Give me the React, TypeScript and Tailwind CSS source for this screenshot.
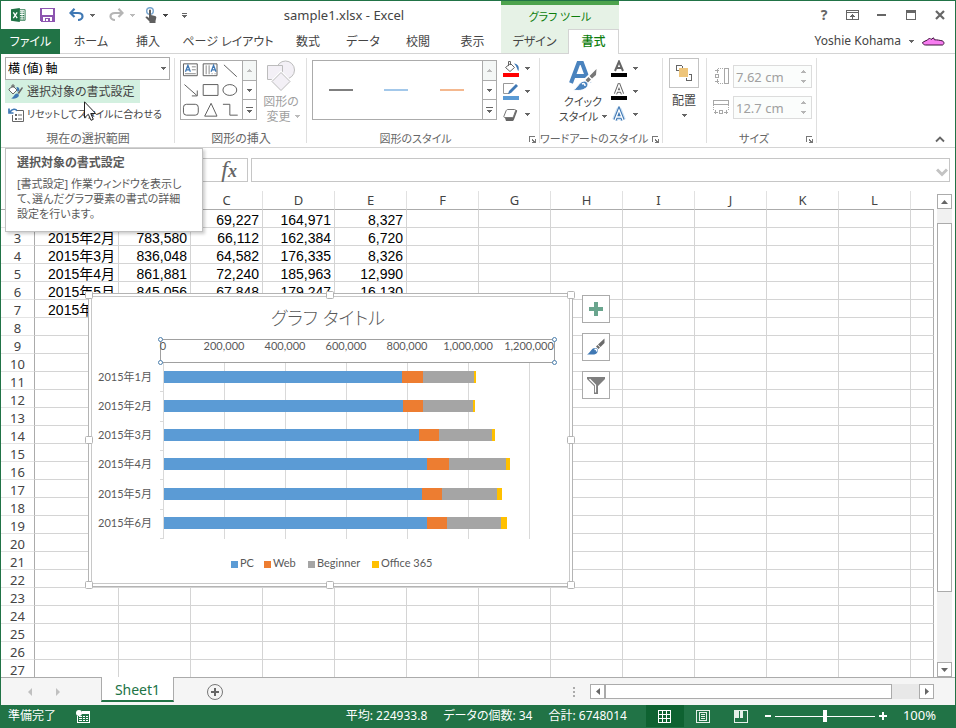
import type { ReactNode } from 'react';
import clsx from 'clsx';

const COLUMNS = ['A', 'B', 'C', 'D', 'E', 'F', 'G', 'H', 'I', 'J', 'K', 'L'];
const FIRST_ROW = 2;
const LAST_ROW = 27;

// month, PC, Web, Beginner, Office 365
const DATA: [string, number, number, number, number][] = [
  ['2015年1月', 781420, 69227, 164971, 8327],
  ['2015年2月', 783580, 66112, 162384, 6720],
  ['2015年3月', 836048, 64582, 176335, 8326],
  ['2015年4月', 861881, 72240, 185963, 12990],
  ['2015年5月', 845056, 67848, 179247, 16130],
  ['2015年6月', 863210, 65304, 177120, 18993],
];

const SERIES = [
  { name: 'PC', color: '#5b9bd5', x: 231 },
  { name: 'Web', color: '#ed7d31', x: 264 },
  { name: 'Beginner', color: '#a5a5a5', x: 308 },
  { name: 'Office 365', color: '#ffc000', x: 372 },
];

const TABS = [
  { label: 'ホーム', width: 'w-[62px]' },
  { label: '挿入', width: 'w-[52px]' },
  { label: 'ページ レイアウト', width: 'w-[108px]' },
  { label: '数式', width: 'w-[52px]' },
  { label: 'データ', width: 'w-[58px]' },
  { label: '校閲', width: 'w-[52px]' },
  { label: '表示', width: 'w-[57px]' },
];

function Caret({ className = 'text-[#666]', up = false }: { className?: string; up?: boolean }) {
  return (
    <svg width="5" height="3" viewBox="0 0 5 3" className={clsx('shrink-0', className)} shapeRendering="crispEdges">
      <path d={up ? 'M2 0h1v1h1v1h1v1H0V2h1V1h1z' : 'M0 0h5v1H4v1H3v1H2V2H1V1H0z'} fill="currentColor" />
    </svg>
  );
}

/* ---------- title bar ---------- */

function ExcelLogo() {
  return (
    <svg width="17" height="16" viewBox="0 0 17 16">
      <path d="M9 2h7v12H9z" fill="#fff" stroke="#217346" />
      <path d="M10 4h2v1h-2zM13 4h2v1h-2zM10 6h2v1h-2zM13 6h2v1h-2zM10 8h2v1h-2zM13 8h2v1h-2zM10 10h2v1h-2zM13 10h2v1h-2zM10 12h2v1h-2zM13 12h2v1h-2z" fill="#217346" />
      <path d="M0 1.500 10 0v16L0 14.500z" fill="#217346" />
      <path d="m2.600 5 4.400 6.500M7 5l-4.400 6.500" stroke="#fff" strokeWidth="1.500" />
    </svg>
  );
}

function SaveIcon() {
  return (
    <svg width="15" height="14" viewBox="0 0 15 14" shapeRendering="crispEdges">
      <path d="M0 0h15v14H1l-1-1z" fill="#8d55b0" />
      <path d="M2 1h11v6H2zM3 9h9v4H3z" fill="#fff" />
      <path d="M5 10h5v3H5z" fill="#8d55b0" />
      <path d="M6 11h2v2H6z" fill="#fff" />
    </svg>
  );
}

function UndoIcon({ flip = false }: { flip?: boolean }) {
  return (
    <svg width="15" height="14" viewBox="0 0 15 14" fill="none" stroke={flip ? '#b5b5b5' : '#3f78b4'} strokeWidth="2.2">
      {flip ? (
        <path d="M13 5H6C3 5 1.500 6.500 1.500 8.500S3.500 12 6 12M9.500.8 13.500 5l-4 4" />
      ) : (
        <path d="M2 5h7c3 0 4.500 1.500 4.500 3.500S11.500 12 9 12M5.500.8 1.500 5l4 4" />
      )}
    </svg>
  );
}

function TouchIcon() {
  return (
    <svg width="12" height="16" viewBox="0 0 12 16">
      <circle cx="5" cy="4" r="3.300" fill="none" stroke="#7ba7cf" strokeWidth="1.500" />
      <path d="M4 3.500a1 1 0 0 1 2 0V8l4 1c1 .3 1.500.8 1.300 1.800L10.500 14v2H4.500v-1.500L.5 10.500c0-1 1-1.300 2-.7L4 11z" fill="#5f5f5f" />
    </svg>
  );
}

function TitleBar() {
  return (
    <div className="flex h-7">
      <div className="flex w-[186px] shrink-0 items-center pl-2.5">
        <ExcelLogo />
        <button className="ml-3.5" aria-label="上書き保存"><SaveIcon /></button>
        <button className="ml-3.5 flex items-center gap-1.5" aria-label="元に戻す"><UndoIcon /><Caret /></button>
        <button className="ml-3.5 flex items-center gap-1.5" aria-label="やり直し"><UndoIcon flip /><Caret className="text-[#bbb]" /></button>
        <button className="ml-2.5 flex items-center gap-1.5" aria-label="タッチ/マウス モードの切り替え"><TouchIcon /><Caret className="text-[#444]" /></button>
        <button className="ml-3.5" aria-label="クイック アクセス ツール バーのユーザー設定">
          <svg width="5" height="5" viewBox="0 0 5 5" shapeRendering="crispEdges" className="block text-[#666]">
            <path d="M0 0h5v1H0zM0 2h5v1H4v1H3v1H2V4H1V3H0z" fill="currentColor" />
          </svg>
        </button>
      </div>
      <h1 className="w-[314px] shrink-0 text-center text-[13px] leading-7 text-[#444]">sample1.xlsx - Excel</h1>
      <div className="w-[118px] shrink-0 border-t-4 border-[#4da34d] bg-[#e6f2e6] text-center text-[11px] leading-6 text-[#0c7d0c]">グラフ ツール</div>
      <div className="flex flex-1 items-center justify-end pr-2.5 text-[#666]">
        <button className="w-3 text-sm leading-7 font-bold" aria-label="ヘルプ">?</button>
        <button className="ml-4" aria-label="リボンの表示オプション">
          <svg width="13" height="10" viewBox="0 0 13 10" shapeRendering="crispEdges">
            <path d="M.5.5h12v9H.5zM1 2.500h11" fill="none" stroke="currentColor" />
            <path d="M6 4h1v1h1v1h1v1H7v2H6V7H4V6h1V5h1z" fill="currentColor" />
          </svg>
        </button>
        <button className="ml-[18px]" aria-label="最小化"><span className="block h-0.5 w-[9px] bg-[#666]" /></button>
        <button className="ml-5" aria-label="最大化"><span className="block h-2.5 w-[10px] border border-t-3 border-[#666]" /></button>
        <button className="ml-[19px]" aria-label="閉じる">
          <svg width="10" height="10" viewBox="0 0 10 10"><path d="m1 1 8 8M9 1 1 9" stroke="currentColor" strokeWidth="2.200" /></svg>
        </button>
      </div>
    </div>
  );
}

function TabBar() {
  return (
    <nav className="flex h-[25px] text-xs leading-6 text-[#444]">
      <button className="w-[59px] shrink-0 bg-[#217346] pt-px text-white">ファイル</button>
      {TABS.map(t => (
        <button key={t.label} className={clsx('shrink-0 border-b border-[#d4d4d4] pt-px whitespace-nowrap', t.width)}>{t.label}</button>
      ))}
      <button className="w-[67px] shrink-0 border-b border-[#d4d4d4] bg-[#e6f2e6] pt-px">デザイン</button>
      <button className="w-[51px] shrink-0 border-x border-t border-[#d4d4d4] font-medium text-[#0c7d0c]">書式</button>
      <div className="flex flex-1 items-center justify-end border-b border-[#d4d4d4] pr-2.5">
        <button className="flex items-center gap-2 text-xs whitespace-nowrap">
          Yoshie Kohama
          <Caret />
          <svg width="23" height="9" viewBox="0 0 23 9">
            <path d="M.5 5.500c2-1 3-2 5-2.500l2-2 1.500 1.500L11.500.8l1 2c3 0 5 .5 7.500 1 2.500.7 2.500 3.500.5 4.200H3.500C2 8 .8 7 .5 5.500z" fill="#f77cf0" stroke="#3d123b" />
          </svg>
        </button>
      </div>
    </nav>
  );
}

/* ---------- ribbon ---------- */

function Group({ label, launcher, className, children }: { label?: string; launcher?: boolean; className: string; children: ReactNode }) {
  return (
    <section className={clsx('relative flex shrink-0 flex-col', className)}>
      <div className="flex h-[76px] pt-[3px]">{children}</div>
      <div className={clsx('text-center leading-[17px] whitespace-nowrap text-[#666]', launcher ? 'pr-4 text-[11px]' : 'text-xs')}>{label}</div>
      {launcher && (
        <button className="absolute right-1 bottom-1" aria-label={`${label}の詳細`}>
          <svg width="7" height="7" viewBox="0 0 7 7" shapeRendering="crispEdges">
            <path d="M0 0h6v1H1v5H0zM3 3h1v1h1v1h1V3h1v4H3V6h1V5H3z" fill="#777" />
          </svg>
        </button>
      )}
      <div className="absolute top-1 right-0 bottom-1 w-px bg-[#dfdfdf]" />
    </section>
  );
}

function GalleryScroll() {
  return (
    <div className="flex w-[14px] flex-col border-l border-[#ababab]">
      <button className="flex flex-1 items-center justify-center bg-[#f4f7f6]" aria-label="前の行"><Caret up className="text-[#bbb]" /></button>
      <button className="flex flex-1 items-center justify-center border-y border-[#ababab]" aria-label="次の行"><Caret /></button>
      <button className="flex flex-1 items-center justify-center" aria-label="その他">
        <svg width="7" height="6" viewBox="0 0 7 6" shapeRendering="crispEdges">
          <path d="M0 0h7v1H0zM1 3h5v1H5v1H4v1H3V5H2V4H1z" fill="#666" />
        </svg>
      </button>
    </div>
  );
}

function ShapeGallery() {
  return (
    <div className="mt-[3px] ml-[5px] flex h-[60px] w-[77px] border border-[#ababab]">
      <svg width="62" height="58" viewBox="181 61 62 58" fill="none" stroke="#5e5e5e">
        <path d="M183.500 63.500h14v12h-14zM203.500 63.500h14v12h-14z" />
        <path d="m185.500 71.500 2.500-6.500 2.500 6.500M186.500 69.500h3M211.500 71.500l2.500-6.500 2.500 6.500M212.500 69.500h3" stroke="#3f78b4" strokeWidth="1.300" />
        <path d="M192 66.500h4M192 69.500h4M185 73.500h11M206.500 65v9M209.500 65v9M212.500 73v1M215.500 73v1" stroke="#8a8a8a" />
        <path d="m224.500 64.500 13 12M184.500 84.500l12.500 11M197.500 90.500v5.500h-5.500" />
        <path d="M203.500 84.500h15v11h-15z" />
        <ellipse cx="230.500" cy="90" rx="7" ry="5.500" />
        <rect x="183.500" y="104.500" width="15" height="11" rx="3" />
        <path d="m211.500 103.500 6 13h-12.500zM223.500 104.500h7v11h8" />
      </svg>
      <GalleryScroll />
    </div>
  );
}

function StyleGallery() {
  return (
    <div className="mt-[3px] ml-[5px] flex h-[60px] w-[185px] border border-[#ababab]">
      <div className="flex flex-1 items-center justify-around pr-0.5">
        <button className="h-0.5 w-6 bg-[#7f7f7f]" aria-label="グレーの線" />
        <button className="h-0.5 w-6 bg-[#a3c8ea]" aria-label="青の線" />
        <button className="h-0.5 w-6 bg-[#f4b88f]" aria-label="オレンジの線" />
      </div>
      <GalleryScroll />
    </div>
  );
}

function IconMenu({ label, children }: { label: string; children: ReactNode }) {
  return (
    <button className="flex h-[23px] items-center gap-[5px]" aria-label={label}>
      <svg width="17" height="18" viewBox="0 0 17 18">{children}</svg>
      <Caret />
    </button>
  );
}

function SizeField({ label, value, children }: { label: string; value: string; children: ReactNode }) {
  return (
    <label className="flex items-center gap-[3px]" aria-label={label}>
      <svg width="17" height="17" viewBox="0 0 17 17" fill="none" stroke="#a8a8a8" shapeRendering="crispEdges">{children}</svg>
      <span className="relative flex">
        <input disabled defaultValue={value} className="h-[23px] w-[79px] border border-[#dcdcdc] bg-[#fbfdfc] pl-0.5 text-[13px] text-[#a0a0a0]" />
        <span className="absolute top-[5px] right-1.5 flex flex-col gap-[7px]">
          <Caret up className="text-[#b5b5b5]" />
          <Caret className="text-[#b5b5b5]" />
        </span>
      </span>
    </label>
  );
}

function Ribbon() {
  return (
    <div className="flex h-[94px] border-b border-[#d4d4d4] text-[#444]">
      <Group label="現在の選択範囲" className="w-[174px]">
        <div className="flex flex-col items-start pl-1">
          <div className="relative">
            <select aria-label="グラフ要素" className="block h-[23px] w-[165px] appearance-none border border-[#ababab] bg-white px-0.5 text-xs text-black">
              <option>横 (値) 軸</option>
            </select>
            <span className="pointer-events-none absolute top-2.5 right-1 flex"><Caret /></span>
          </div>
          <button className="flex h-[23px] w-[135px] items-center gap-[3px] bg-[#d3f0e0] pl-[3px] text-xs whitespace-nowrap">
            <svg width="16" height="16" viewBox="0 0 16 16" className="shrink-0">
              <path d="m1 5 4-3 4 4-4 4-4-4z" fill="#fff" stroke="#666" />
              <path d="M4 4V1h2v3" fill="none" stroke="#666" />
              <path d="M8.500 3c2 0 3 1 3 3.500L9.500 8" fill="#3f78b4" />
              <path d="m15 4-4 6-1.500-1L14 3z" fill="#666" />
              <path d="M9 9.500c1.500 0 2.500 1.500 1.500 3S7 15 3 14.500C6 13.500 6 9.800 9 9.500z" fill="#3f78b4" />
            </svg>
            選択対象の書式設定
          </button>
          <button className="flex h-[23px] items-center gap-[3px] pl-[3px] text-[10px] whitespace-nowrap">
            <svg width="16" height="16" viewBox="0 0 16 16" className="shrink-0" fill="none">
              <path d="M9 4C8 1.500 4 1.500 2 5M1 1.500V6h4.500" stroke="#3f78b4" strokeWidth="1.700" />
              <path d="M9 3.500h6.500v11h-11V8" stroke="#666" />
              <path d="M7 7h2v2H7zM7 11h2v2H7z" fill="#666" />
              <path d="M10 8h4M10 12h4" stroke="#666" />
            </svg>
            リセットしてスタイルに合わせる
          </button>
        </div>
      </Group>

      <Group label="図形の挿入" className="w-[132px]">
        <ShapeGallery />
        <button disabled className="ml-1 flex w-10 flex-col items-center text-xs leading-[15px] whitespace-nowrap text-[#a0a0a0]">
          <svg width="32" height="32" viewBox="0 0 32 32" className="mt-[3px] mb-0.5 shrink-0" fill="#f3f0f6" stroke="#bcbcbc">
            <circle cx="20.500" cy="10" r="9" />
            <path d="M2.500 5.500h15v14h-15z" />
            <path d="m16 12.500 9 9-9 9-9-9z" fill="#fff" stroke="#fff" strokeWidth="3" />
            <path d="m16 12.500 9 9-9 9-9-9z" />
          </svg>
          <span>図形の</span>
          <span className="flex items-center gap-1 pl-1">変更 <Caret className="text-[#bbb]" /></span>
        </button>
      </Group>

      <Group label="図形のスタイル" launcher className="w-[233px]">
        <StyleGallery />
        <div className="ml-1.5 flex flex-col">
          <IconMenu label="図形の塗りつぶし">
            <path d="m2.500 7.500 5-4 4 4-4.500 4z" fill="#fff" stroke="#666" />
            <path d="M5.500 6V1.500h2V5" fill="none" stroke="#666" />
            <path d="M11 3.500c4 .5 5.500 3 4.500 7.500-1.500-1-1-4-4.500-7.500z" fill="#3f78b4" />
            <path d="M0 13h16v4H0z" fill="#f00" />
          </IconMenu>
          <IconMenu label="図形の枠線">
            <path d="M10.500.5H.5v10h6" fill="none" stroke="#999" />
            <path d="m13 1 2 2-7 7-3 1 1-3z" fill="#3f78b4" />
            <path d="M0 13h16v4H0z" fill="#5b9bd5" />
          </IconMenu>
          <IconMenu label="図形の効果">
            <path d="M5 4h8c1 0 1.500.5 1 1.500l-3 8c-.4 1-1 1.500-2 1.500H3l-1-3z" fill="#666" />
            <path d="M5 3.500h6.500c1 0 1.500.5 1 1.500l-2 5.500c-.3.8-.8 1-1.500 1H2c-1 0-1.500-.5-1-1.500l2-5c.4-1 1-1.500 2-1.500z" fill="#fff" stroke="#777" />
          </IconMenu>
        </div>
      </Group>

      <Group label="ワードアートのスタイル" launcher className="w-[123px]">
        <button className="ml-4 flex w-[54px] flex-col items-center text-[11px] leading-[15px] whitespace-nowrap">
          <svg width="30" height="32" viewBox="0 0 30 32" className="mt-1 mb-px shrink-0">
            <path d="M3 22 10.500 2h3.500l7.500 20M6 15h12" fill="none" stroke="#4a83be" strokeWidth="4" />
            <path d="m28.500 8-.5 6-8 8-3-3z" fill="#fff" stroke="#fff" strokeWidth="3" />
            <path d="m28.500 8-.5 6-4 3.500-2.500-2.500zM20.500 16l2.500 2.500-3 3-2.500-2.500z" fill="#777" />
            <path d="M17 20c3 1 4 4 1.500 6.500-3 3-8 3.500-13.500 2.500 5-2 6-9 12-9z" fill="#4a83be" stroke="#fff" />
            <path d="M14 23c2-1 3 0 3 2" fill="none" stroke="#fff" strokeWidth="1.500" />
          </svg>
          <span>クイック</span>
          <span className="flex items-center gap-1">スタイル <Caret /></span>
        </button>
        <div className="ml-px flex flex-col">
          <IconMenu label="文字の塗りつぶし">
            <path d="M4 11 8 1.500 12 11M5.500 8h5" fill="none" stroke="#666" strokeWidth="2" />
            <path d="M0 13h16v4H0z" fill="#000" />
          </IconMenu>
          <IconMenu label="文字の輪郭">
            <path d="M4.500 11 8 2l3.500 9M6 8h4" fill="none" stroke="#666" strokeWidth="3.400" />
            <path d="M4.500 11 8 2l3.500 9M6 8h4" fill="none" stroke="#fff" strokeWidth="1.400" />
            <path d="M0 13h16v4H0z" fill="#000" />
          </IconMenu>
          <IconMenu label="文字の効果">
            <path d="M4 14 8 4l4 10M5.500 11h5" fill="none" stroke="#cfe2f4" strokeWidth="6" strokeLinejoin="round" />
            <path d="M4 14 8 4l4 10M5.500 11h5" fill="none" stroke="#3f78b4" strokeWidth="3.400" />
            <path d="M4 14 8 4l4 10M5.500 11h5" fill="none" stroke="#fff" strokeWidth="1.300" />
          </IconMenu>
        </div>
      </Group>

      <Group className="w-[44px]">
        <button className="ml-1.5 flex w-[30px] flex-col items-center text-xs leading-4">
          <span className="mt-px mb-[5px] flex size-[30px] shrink-0 items-center justify-center border border-[#c3c3c3]">
            <svg width="16" height="16" viewBox="0 0 16 16" shapeRendering="crispEdges">
              <path d="M.5 5.500v-5h5M10 15.500h5.500V10M.5 5.500H3M6 .5V3M10 15.500V13M15.500 9.500H13" fill="none" stroke="#666" />
              <path d="M3 3h9v9H3z" fill="#eec57b" />
            </svg>
          </span>
          配置
          <span className="mt-[5px]"><Caret /></span>
        </button>
      </Group>

      <Group label="サイズ" launcher className="w-[110px]">
        <div className="ml-1.5 flex flex-col gap-2 pt-2">
          <SizeField label="図形の高さ" value="7.62 cm">
            <path d="M11.500.5h4v15h-4z" />
            <path d="M5 .5h6M5 15.500h6" strokeDasharray="1 1" />
            <path d="M2.500 6.500h3v3h-3zM4 1v4M4 11v4M2 2.500h4M2 13.500h4" />
          </SizeField>
          <SizeField label="図形の幅" value="12.7 cm">
            <path d="M.5 1.500h15v4H.5z" />
            <path d="M.5 6v6M15.500 6v6" strokeDasharray="1 1" />
            <path d="M6.500 11.500h3v3h-3zM1 13h4M11 13h4M2.500 11v4M13.500 11v4" />
          </SizeField>
        </div>
      </Group>

      <div className="flex flex-1 items-end justify-end pr-2.5 pb-1">
        <button aria-label="リボンを折りたたむ">
          <svg width="10" height="7" viewBox="0 0 10 7"><path d="m1 5.500 4-4 4 4" fill="none" stroke="#666" strokeWidth="1.800" /></svg>
        </button>
      </div>
    </div>
  );
}

function FormulaBar() {
  return (
    <div className="flex h-[43px] items-start gap-[3px] pt-2.5 pr-[5px] pl-1">
      <div className="flex h-6 w-[243px] shrink-0 items-center justify-end border border-[#c6c6c6] pr-2.5">
        <button className="font-['Liberation_Serif',serif] text-2xl leading-5 text-[#666] italic" aria-label="関数の挿入">
          f<span className="text-lg leading-5 font-bold">x</span>
        </button>
      </div>
      <div className="relative flex-1">
        <input aria-label="数式バー" className="block h-6 w-full border border-[#c6c6c6] px-1 text-xs outline-none" />
        <svg width="12" height="9" viewBox="0 0 12 9" className="absolute top-2.5 right-0.5">
          <path d="m1 1.500 5 5 5-5" fill="none" stroke="#c3c3c3" strokeWidth="3" />
        </svg>
      </div>
    </div>
  );
}

/* ---------- worksheet ---------- */

function Sheet() {
  const rows = Array.from({ length: LAST_ROW - FIRST_ROW + 1 }, (_, i) => i + FIRST_ROW);
  return (
    <table className="w-full table-fixed border-separate border-spacing-0">
      <colgroup>
        <col className="w-[34px]" />
        <col className="w-[84px]" />
        {COLUMNS.slice(1).map(c => <col key={c} className="w-[72px]" />)}
        <col />
      </colgroup>
      <thead>
        <tr className="h-[19px] text-[13px] leading-4 text-[#444]">
          <th className="border-r border-b border-[#d4d4d4] border-b-[#ababab] p-0" />
          {COLUMNS.map(c => (
            <th key={c} className="border-r border-b border-r-[#e1e1e1] border-b-[#ababab] p-0 font-normal">{c}</th>
          ))}
          <th className="border-b border-[#ababab] p-0" />
        </tr>
      </thead>
      <tbody>
        {rows.map(n => {
          const record = DATA[n - FIRST_ROW];
          return (
            <tr key={n} className="h-[18px] leading-[14px]">
              <th className="border-r border-b border-r-[#ababab] border-b-[#e4e4e4] p-0 pt-[3px] text-[13px] font-normal text-[#444]">{n}</th>
              {COLUMNS.map((c, i) => (
                <td key={c} className="border-r border-b border-[#d4d4d4] p-0 pt-[3px] pr-[3px] text-right font-['Liberation_Sans','Noto_Sans_CJK_JP',sans-serif] text-sm leading-[14px] whitespace-nowrap text-black">
                  {record && i < record.length ? record[i].toLocaleString('en-US') : null}
                </td>
              ))}
              <td className="border-r border-b border-[#d4d4d4] border-r-[#ababab] p-0" />
            </tr>
          );
        })}
      </tbody>
    </table>
  );
}

const AXIS_X = 163;
const STEP = 61; // pixels per 200,000
const ROW_PITCH = 29.3;

function Chart() {
  const handles = [[89, 295], [330, 295], [571, 295], [89, 440], [571, 440], [89, 585], [330, 585], [571, 585]];
  return (
    <svg width="492" height="300" viewBox="85 290 492 300" className="absolute top-[99px] left-[84px] font-[Lato,'Noto_Sans_CJK_JP',sans-serif] text-[11px]">
      <rect x="88.500" y="293.500" width="484" height="293" fill="#fff" stroke="#b4b4b4" />
      <rect x="91.500" y="296.500" width="478" height="287" fill="#fff" stroke="#c8c8c8" />
      {handles.map(([x, y]) => (
        <rect key={`${x}-${y}`} x={x - 3.5} y={y - 3.5} width="7" height="7" rx="1" fill="#fff" stroke="#b4b4b4" />
      ))}
      <text x="328" y="325" textAnchor="middle" fill="#595959" className="text-lg font-light">グラフ タイトル</text>

      {/* gridlines and category ticks */}
      {[1, 2, 3, 4, 5, 6].map(i => (
        <path key={i} d={`M${AXIS_X + i * STEP + 0.5} 363V539`} stroke="#d9d9d9" />
      ))}
      <path d={`M${AXIS_X + 0.5} 363V539`} stroke="#d9d9d9" />
      {[1, 2, 3, 4, 5, 6].map(i => (
        <path key={i} d={`M160 ${Math.floor(362.5 + i * ROW_PITCH) + 0.5}h3`} stroke="#d9d9d9" />
      ))}

      {/* stacked bars */}
      {DATA.map((record, row) => {
        const y = Math.floor(371 + row * ROW_PITCH);
        let x = AXIS_X + 1;
        return (
          <g key={record[0]} shapeRendering="crispEdges">
            <text x="152" y={y + 10} textAnchor="end" fill="#595959">{record[0]}</text>
            {SERIES.map((s, i) => {
              const width = ((record[i + 1] as number) / 200000) * STEP;
              const left = x;
              x += width;
              return <rect key={s.name} x={left} y={y} width={width} height="12" fill={s.color} />;
            })}
          </g>
        );
      })}

      {/* selected value axis */}
      <rect x="160.500" y="339.500" width="394" height="23" fill="none" stroke="#a0a0a0" />
      {[0, 1, 2, 3, 4, 5, 6].map(i => (
        <text key={i} x={AXIS_X + i * STEP} y="350" textAnchor="middle" fill="#595959">
          {(i * 200000).toLocaleString('en-US')}
        </text>
      ))}
      {[[160, 339], [554, 339], [160, 362], [554, 362]].map(([x, y]) => (
        <circle key={`${x}-${y}`} cx={x + 0.5} cy={y + 0.5} r="2" fill="#fff" stroke="#4a7eac" />
      ))}

      {SERIES.map(s => (
        <g key={s.name}>
          <rect x={s.x} y="561" width="7" height="7" fill={s.color} />
          <text x={s.x + 9} y="567" fill="#595959">{s.name}</text>
        </g>
      ))}
    </svg>
  );
}

function ChartButtons() {
  const box = 'flex size-7 items-center justify-center border border-[#ababab] bg-white';
  return (
    <div className="absolute top-[104px] left-[581px] flex flex-col gap-2.5">
      <button className={box} aria-label="グラフ要素">
        <svg width="14" height="14" viewBox="0 0 14 14"><path d="M5 0h4v5h5v4H9v5H5V9H0V5h5z" fill="#6aa58e" /></svg>
      </button>
      <button className={box} aria-label="グラフ スタイル">
        <svg width="18" height="18" viewBox="0 0 18 18">
          <path d="M17.500.5v4.500L13.500 9 11 6.500zM10.500 7l2.500 2.500-1.500 1.500L9 8.500z" fill="#6b6b6b" />
          <path d="M8 10c2.500 0 3.500 2 2.500 4-.8 2-2.500 2.500-5 2.500H0C3.500 15 4 10 8 10z" fill="#3f78b4" />
          <path d="M7.500 11.500c2-.5 2.500.5 2 2" fill="none" stroke="#fff" strokeWidth="1.500" />
        </svg>
      </button>
      <button className={box} aria-label="グラフ フィルター">
        <svg width="18" height="17" viewBox="0 0 18 17">
          <path d="M0 0h18v2l-7 7v8H7V9L0 2z" fill="#7f7f7f" />
          <path d="m2.500 2 6 6v7.500" fill="none" stroke="#fff" strokeWidth="1.200" />
        </svg>
      </button>
    </div>
  );
}

function VerticalScroll() {
  return (
    <div className="flex w-[21px] shrink-0 flex-col items-center pt-[3px]">
      <button className="flex h-[15px] w-[15px] shrink-0 items-center justify-center border border-[#ababab]" aria-label="上へスクロール">
        <svg width="7" height="4" viewBox="0 0 7 4"><path d="M3.500 0 7 4H0z" fill="#666" /></svg>
      </button>
      <div className="flex w-[15px] flex-1 flex-col bg-[#f1f1f1] pt-3.5">
        <div className="h-[84%] border border-[#ababab] bg-white" />
      </div>
      <button className="flex h-[15px] w-[15px] shrink-0 items-center justify-center border border-[#ababab]" aria-label="下へスクロール">
        <svg width="7" height="4" viewBox="0 0 7 4"><path d="M0 0h7L3.500 4z" fill="#666" /></svg>
      </button>
    </div>
  );
}

function SheetTabs() {
  return (
    <div className="flex h-7 shrink-0 bg-[#f5f5f5]">
      <div className="flex w-[100px] shrink-0 items-center gap-6 border-t border-[#ababab] pl-[27px]">
        <svg width="4" height="8" viewBox="0 0 4 8"><path d="M4 0v8L0 4z" fill="#c0c0c0" /></svg>
        <svg width="4" height="8" viewBox="0 0 4 8"><path d="M0 0v8l4-4z" fill="#c0c0c0" /></svg>
      </div>
      <button className="h-[25px] w-[73px] shrink-0 border-x border-b-2 border-[#ababab] border-b-[#217346] bg-white pt-0.5 text-sm leading-5 text-[#217346]">Sheet1</button>
      <div className="flex flex-1 items-center border-t border-[#ababab] pl-[33px]">
        <button aria-label="新しいシート">
          <svg width="16" height="16" viewBox="0 0 16 16" className="block" fill="none" stroke="#777">
            <circle cx="8" cy="8" r="7.500" />
            <path d="M8 4v8M4 8h8" stroke="#666" strokeWidth="2" />
          </svg>
        </button>
        <svg width="2" height="10" viewBox="0 0 2 10" className="ml-auto"><path d="M0 0h2v2H0zM0 4h2v2H0zM0 8h2v2H0z" fill="#ababab" /></svg>
      </div>
      <div className="flex w-[380px] shrink-0 items-center border-t border-[#ababab] pr-[21px] pl-[15px]">
        <button className="flex size-[15px] shrink-0 items-center justify-center border border-[#ababab] bg-white" aria-label="左へスクロール">
          <svg width="4" height="7" viewBox="0 0 4 7"><path d="M4 0v7L0 3.500z" fill="#666" /></svg>
        </button>
        <div className="h-[15px] flex-1 bg-[#e8e8e8] pr-[27px]">
          <div className="h-[15px] border border-[#ababab] bg-white" />
        </div>
        <button className="flex size-[15px] shrink-0 items-center justify-center border border-[#ababab] bg-white" aria-label="右へスクロール">
          <svg width="4" height="7" viewBox="0 0 4 7"><path d="M0 0v7l4-3.500z" fill="#666" /></svg>
        </button>
      </div>
    </div>
  );
}

function StatusBar() {
  return (
    <footer className="flex h-[22px] shrink-0 items-center bg-[#217346] pr-[19px] text-xs whitespace-nowrap text-white">
      <span className="ml-[7px]">準備完了</span>
      <button className="ml-5" aria-label="マクロの記録">
        <svg width="14" height="13" viewBox="0 0 14 13" shapeRendering="crispEdges" className="block">
          <path d="M6 1h7v2H6zM1 6v6.500h12V3" fill="none" stroke="#fff" />
          <path d="M6 1h7v3H6zM3 6h3v1H3zM7 6h2v1H7zM10 6h2v1h-2zM3 8h3v1H3zM7 8h2v1H7zM10 8h2v1h-2zM3 10h3v1H3zM7 10h2v1H7zM10 10h2v1h-2z" fill="#fff" />
          <circle cx="3" cy="3" r="3" fill="#fff" shapeRendering="auto" />
        </svg>
      </button>
      <div className="ml-auto flex gap-4">
        <span>平均: 224933.8</span>
        <span>データの個数: 34</span>
        <span>合計: 6748014</span>
      </div>
      <button className="ml-[19px] flex h-[22px] w-[38px] items-center justify-center bg-[#0e6231]" aria-label="標準">
        <svg width="13" height="13" viewBox="0 0 13 13" fill="none" stroke="#fff" shapeRendering="crispEdges"><path d="M.5.5h12v12H.5zM4.500 0v13M8.500 0v13M0 4.500h13M0 8.500h13" /></svg>
      </button>
      <button className="ml-3" aria-label="ページ レイアウト">
        <svg width="14" height="13" viewBox="0 0 14 13" fill="none" stroke="#e5f0e9" shapeRendering="crispEdges"><path d="M.5.5h13v12H.5zM3.500 2.500h7v8h-7zM5 4.500h4M5 6.500h4M5 8.500h4" /></svg>
      </button>
      <button className="ml-6" aria-label="改ページ プレビュー">
        <svg width="14" height="13" viewBox="0 0 14 13" shapeRendering="crispEdges"><path d="M.5.500h13v12H.5z" fill="none" stroke="#e5f0e9" /><path d="M1 1h4v7H1zM6 1h3v7H6z" fill="#e5f0e9" /></svg>
      </button>
      <button className="ml-[17px]" aria-label="縮小"><span className="block h-0.5 w-1.5 bg-white" /></button>
      <input
        type="range"
        aria-label="ズーム"
        defaultValue={50}
        className="mx-1 h-3 w-[100px] appearance-none bg-[linear-gradient(#fff,#fff)] bg-[length:100%_1px] bg-center bg-no-repeat [&::-webkit-slider-thumb]:h-3 [&::-webkit-slider-thumb]:w-1 [&::-webkit-slider-thumb]:appearance-none [&::-webkit-slider-thumb]:bg-white"
      />
      <button aria-label="拡大">
        <svg width="8" height="8" viewBox="0 0 8 8" className="block"><path d="M3 0h2v3h3v2H5v3H3V5H0V3h3z" fill="#fff" /></svg>
      </button>
      <span className="ml-4 text-[13px]">100%</span>
    </footer>
  );
}

function FormatTooltip() {
  return (
    <div role="tooltip" className="absolute top-[147px] left-1 z-10 h-[84px] w-[198px] border border-[#c0c0c0] bg-white pt-1.5 pl-[11px] text-[11px] leading-[15px] whitespace-nowrap text-[#5a5a5a] shadow-[2px_2px_3px_rgba(0,0,0,0.2)]">
      <p className="text-xs leading-[15px] font-bold">選択対象の書式設定</p>
      <p className="mt-1.5">
        [書式設定] 作業ウィンドウを表示し<br />
        て、選んだグラフ要素の書式の詳細<br />
        設定を行います。
      </p>
    </div>
  );
}

export default function App() {
  return (
    <div className="relative flex h-screen flex-col overflow-hidden border border-[#217346] bg-white font-['Noto_Sans','Noto_Sans_CJK_JP',sans-serif] [font-feature-settings:'palt']">
      <header className="shrink-0">
        <TitleBar />
        <TabBar />
        <Ribbon />
      </header>
      <FormulaBar />
      <main className="relative flex min-h-0 flex-1 overflow-hidden">
        <div className="min-w-0 flex-1 overflow-hidden"><Sheet /></div>
        <VerticalScroll />
        <Chart />
        <ChartButtons />
      </main>
      <SheetTabs />
      <StatusBar />
      <FormatTooltip />
      {/* mouse pointer */}
      <svg width="13" height="21" viewBox="0 0 13 21" className="pointer-events-none absolute top-[100px] left-[83px] z-20">
        <path d="M.5.8v16l3.800-3.500 2.700 6 2.300-1-2.600-5.800h5z" fill="#fff" stroke="#222" />
      </svg>
    </div>
  );
}
